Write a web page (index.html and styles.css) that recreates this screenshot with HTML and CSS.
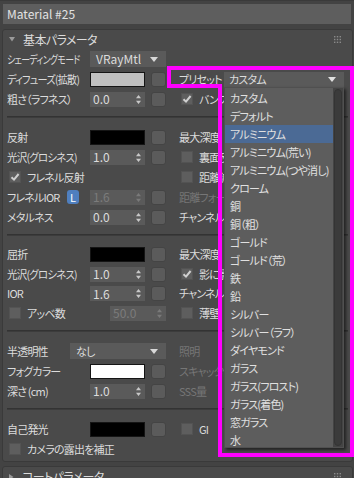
FILE: index.html
```html
<!DOCTYPE html>
<html>
<head>
<meta charset="utf-8">
<link rel="stylesheet" href="styles.css">
</head>
<body>
<div class="titlebar"><div class="namefield">Material #25</div></div>

<div class="rollout">
  <div class="rhead">
    <svg class="tri" width="6" height="5" viewBox="0 0 6 5"><path d="M0 0H6L3 4.5Z" fill="#9a9a9a"/></svg>
    <span class="rtitle">基本パラメータ</span>
    <svg class="grip" width="7" height="7" viewBox="0 0 7 7"><g fill="#8a8a8a"><rect x="0" y="0" width="1.4" height="1.4"/><rect x="2.8" y="0" width="1.4" height="1.4"/><rect x="5.6" y="0" width="1.4" height="1.4"/><rect x="0" y="2.8" width="1.4" height="1.4"/><rect x="2.8" y="2.8" width="1.4" height="1.4"/><rect x="5.6" y="2.8" width="1.4" height="1.4"/><rect x="0" y="5.6" width="1.4" height="1.4"/><rect x="2.8" y="5.6" width="1.4" height="1.4"/><rect x="5.6" y="5.6" width="1.4" height="1.4"/></g></svg>
  </div>

  <div class="sec">
    <div class="row">
      <div class="lc"><span class="lbl"><span class="cond c81">シェーディングモード</span></span><div class="combo w76"><span>VRayMtl</span><svg width="8" height="5" viewBox="0 0 8 5"><path d="M0 0H8L4 5Z" fill="#d8d8d8"/></svg></div></div>
      <div class="rc"></div>
    </div>
    <div class="row">
      <div class="lc"><span class="lbl"><span class="cond c92">ディフューズ(拡散)</span></span><div class="swatch grey"></div><div class="mapbtn"></div></div>
      <div class="rc"><span class="plbl">プリセット</span><div class="combo preset"><span>カスタム</span><svg width="8" height="5" viewBox="0 0 8 5"><path d="M0 0H8L4 5Z" fill="#e0e0e0"/></svg></div></div>
    </div>
    <div class="row">
      <div class="lc"><span class="lbl">粗さ（ラフネス）</span><div class="spin"><span>0.0</span><svg width="5" height="9" viewBox="0 0 5 9"><path d="M2.5 0L5 3.2H0ZM2.5 9L0 5.8H5Z" fill="#c8c8c8"/></svg></div><div class="mapbtn"></div></div>
      <div class="rc"><span class="chk on"><svg width="10" height="10" viewBox="0 0 10 10"><path d="M1.5 5.2L4 7.6L8.6 2" stroke="#d0d0d0" stroke-width="2" fill="none"/></svg></span><span>バンプ</span></div>
    </div>
  </div>
  <div class="sep"></div>

  <div class="sec">
    <div class="row">
      <div class="lc"><span class="lbl">反射</span><div class="swatch black"></div><div class="mapbtn"></div></div>
      <div class="rc"><span>最大深度</span></div>
    </div>
    <div class="row">
      <div class="lc"><span class="lbl"><span class="cond c95">光沢(グロシネス)</span></span><div class="spin"><span>1.0</span><svg width="5" height="9" viewBox="0 0 5 9"><path d="M2.5 0L5 3.2H0ZM2.5 9L0 5.8H5Z" fill="#c8c8c8"/></svg></div><div class="mapbtn"></div></div>
      <div class="rc"><span class="chk"></span><span>裏面反射</span></div>
    </div>
    <div class="row">
      <div class="lc"><span class="chk on left"><svg width="10" height="10" viewBox="0 0 10 10"><path d="M1.5 5.2L4 7.6L8.6 2" stroke="#d0d0d0" stroke-width="2" fill="none"/></svg></span><span>フレネル反射</span></div>
      <div class="rc"><span class="chk"></span><span>距離減衰</span></div>
    </div>
    <div class="row">
      <div class="lc"><span class="lbl flexlbl"><span>フレネルIOR</span><span class="lbtn">L</span></span><div class="spin dis"><span>1.6</span><svg width="5" height="9" viewBox="0 0 5 9"><path d="M2.5 0L5 3.2H0ZM2.5 9L0 5.8H5Z" fill="#7a7a7a"/></svg></div><div class="mapbtn"></div></div>
      <div class="rc dim"><span>距離フォールオフ</span></div>
    </div>
    <div class="row">
      <div class="lc"><span class="lbl">メタルネス</span><div class="spin"><span>0.0</span><svg width="5" height="9" viewBox="0 0 5 9"><path d="M2.5 0L5 3.2H0ZM2.5 9L0 5.8H5Z" fill="#c8c8c8"/></svg></div><div class="mapbtn"></div></div>
      <div class="rc"><span>チャンネルID</span></div>
    </div>
  </div>
  <div class="sep"></div>

  <div class="sec s3">
    <div class="row">
      <div class="lc"><span class="lbl">屈折</span><div class="swatch black"></div><div class="mapbtn"></div></div>
      <div class="rc"><span>最大深度</span></div>
    </div>
    <div class="row">
      <div class="lc"><span class="lbl"><span class="cond c95">光沢(グロシネス)</span></span><div class="spin"><span>1.0</span><svg width="5" height="9" viewBox="0 0 5 9"><path d="M2.5 0L5 3.2H0ZM2.5 9L0 5.8H5Z" fill="#c8c8c8"/></svg></div><div class="mapbtn"></div></div>
      <div class="rc"><span class="chk on"><svg width="10" height="10" viewBox="0 0 10 10"><path d="M1.5 5.2L4 7.6L8.6 2" stroke="#d0d0d0" stroke-width="2" fill="none"/></svg></span><span>影に影響</span></div>
    </div>
    <div class="row">
      <div class="lc"><span class="lbl">IOR</span><div class="spin"><span>1.6</span><svg width="5" height="9" viewBox="0 0 5 9"><path d="M2.5 0L5 3.2H0ZM2.5 9L0 5.8H5Z" fill="#c8c8c8"/></svg></div><div class="mapbtn"></div></div>
      <div class="rc"><span>チャンネルID</span></div>
    </div>
    <div class="row">
      <div class="lc"><span class="chk left"></span><span>アッベ数</span><div class="spin dis w56"><span>50.0</span><svg width="5" height="9" viewBox="0 0 5 9"><path d="M2.5 0L5 3.2H0ZM2.5 9L0 5.8H5Z" fill="#7a7a7a"/></svg></div></div>
      <div class="rc"><span class="chk"></span><span>薄壁</span></div>
    </div>
  </div>
  <div class="sep"></div>

  <div class="sec">
    <div class="row">
      <div class="lc"><span class="lbl short">半透明性</span><div class="combo w96"><span>なし</span><svg width="8" height="5" viewBox="0 0 8 5"><path d="M0 0H8L4 5Z" fill="#d8d8d8"/></svg></div></div>
      <div class="rc dim"><span>照明</span></div>
    </div>
    <div class="row">
      <div class="lc"><span class="lbl">フォグカラー</span><div class="swatch white"></div><div class="mapbtn"></div></div>
      <div class="rc dim"><span>スキャッタ係数</span></div>
    </div>
    <div class="row">
      <div class="lc"><span class="lbl">深さ (cm)</span><div class="spin"><span>1.0</span><svg width="5" height="9" viewBox="0 0 5 9"><path d="M2.5 0L5 3.2H0ZM2.5 9L0 5.8H5Z" fill="#c8c8c8"/></svg></div><div class="mapbtn"></div></div>
      <div class="rc dim"><span>SSS量</span></div>
    </div>
  </div>
  <div class="sep"></div>

  <div class="sec">
    <div class="row">
      <div class="lc"><span class="lbl">自己発光</span><div class="swatch black"></div><div class="mapbtn"></div></div>
      <div class="rc"><span class="chk"></span><span>GI</span></div>
    </div>
    <div class="row">
      <div class="lc"><span class="chk left"></span><span>カメラの露出を補正</span></div>
      <div class="rc"></div>
    </div>
  </div>
</div>

<div class="rollout closed">
  <div class="rhead">
    <svg class="tri" width="5" height="6" viewBox="0 0 5 6"><path d="M0 0L4.5 3L0 6Z" fill="#9a9a9a"/></svg>
    <span class="rtitle">コートパラメータ</span>
    <svg class="grip" width="7" height="7" viewBox="0 0 7 7"><g fill="#8a8a8a"><rect x="0" y="0" width="1.4" height="1.4"/><rect x="2.8" y="0" width="1.4" height="1.4"/><rect x="5.6" y="0" width="1.4" height="1.4"/><rect x="0" y="2.8" width="1.4" height="1.4"/><rect x="2.8" y="2.8" width="1.4" height="1.4"/><rect x="5.6" y="2.8" width="1.4" height="1.4"/><rect x="0" y="5.6" width="1.4" height="1.4"/><rect x="2.8" y="5.6" width="1.4" height="1.4"/><rect x="5.6" y="5.6" width="1.4" height="1.4"/></g></svg>
  </div>
</div>

<div class="plist">
  <div class="items">
    <div class="it">カスタム</div>
    <div class="it">デフォルト</div>
    <div class="it sel">アルミニウム</div>
    <div class="it">アルミニウム(荒い)</div>
    <div class="it">アルミニウム(つや消し)</div>
    <div class="it">クローム</div>
    <div class="it">銅</div>
    <div class="it">銅（粗）</div>
    <div class="it">ゴールド</div>
    <div class="it">ゴールド（荒）</div>
    <div class="it">鉄</div>
    <div class="it">鉛</div>
    <div class="it">シルバー</div>
    <div class="it">シルバー（ラフ）</div>
    <div class="it">ダイヤモンド</div>
    <div class="it">ガラス</div>
    <div class="it">ガラス(フロスト)</div>
    <div class="it">ガラス(着色)</div>
    <div class="it">窓ガラス</div>
    <div class="it">水</div>
  </div>
  <div class="sbar"><div class="thumb"></div></div>
</div>

<svg class="hl" width="354" height="478" viewBox="0 0 354 478"><path d="M169 68H352V455H220V86H169Z" stroke="#ff00ff" stroke-width="4" fill="none"/></svg>
</body>
</html>
```

FILE: styles.css
```css
* { box-sizing: border-box; }
body {
  margin: 0;
  width: 354px;
  height: 478px;
  overflow: hidden;
  position: relative;
  background: #434343;
  color: #dcdcdc;
  font-family: "Noto Sans CJK JP", "Noto Sans", sans-serif;
  font-size: 11px;
  font-feature-settings: "palt" 1;
  letter-spacing: -0.8px;
  line-height: 1;
}
.titlebar {
  height: 29px;
  padding: 3px 3px 0 3px;
  border-top: 1px solid #3a3a3a;
}
.namefield {
  height: 20px;
  background: #5e5e5e;
  display: flex;
  align-items: center;
  padding-left: 4px;
  color: #e2e2e2;
  font-size: 12px;
  letter-spacing: 0;
}
.rollout {
  margin: 0 1px 0 2px;
  background: #4a4a4a;
  border: 1px solid #3a3a3a;
  border-radius: 3px;
  padding: 0 4px 2px 4px;
}
.rollout.closed {
  margin-top: 4px;
  padding-bottom: 0;
}
.rhead {
  height: 19px;
  display: flex;
  align-items: center;
  font-size: 12px;
  letter-spacing: -0.6px;
}
.tri { margin-left: 2px; margin-right: 8px; }
.rtitle { flex: 1; }
.grip { margin-right: 7px; }
.row {
  height: 20px;
  display: grid;
  grid-template-columns: 159px 1fr;
  column-gap: 13px;
  align-items: center;
}
.s3 .row { height: 19.5px; }
.lc, .rc {
  display: flex;
  align-items: center;
  white-space: nowrap;
}
.rc { overflow: hidden; }
.lbl { width: 83px; flex: none; white-space: nowrap; }
.lbl.short { width: 63px; }
.cond {
  display: inline-block;
  transform-origin: left center;
}
.c81 { transform: scaleX(0.81); }
.c92 { transform: scaleX(0.92); }
.c95 { transform: scaleX(0.95); }
.flexlbl { display: flex; align-items: center; }
.lbtn {
  margin-left: auto;
  margin-right: 11px;
  width: 12px;
  height: 14px;
  background: #4f7fbf;
  border-radius: 3px;
  color: #fff;
  font-size: 11px;
  letter-spacing: 0;
  display: flex;
  align-items: center;
  justify-content: center;
}
.spin {
  width: 55px;
  height: 15px;
  background: #5a5a5a;
  display: flex;
  align-items: center;
  justify-content: space-between;
  padding: 0 4px 0 3px;
  flex: none;
  font-size: 12px;
  letter-spacing: 0;
}
.spin.dis { color: #7c7c7c; }
.spin.w56 { width: 56px; margin-left: auto; }
.combo {
  height: 16px;
  background: #5a5a5a;
  display: flex;
  align-items: center;
  justify-content: space-between;
  padding: 0 8px 0 6px;
  flex: none;
}
.w76 { width: 76px; font-size: 12px; letter-spacing: 0; }
.w96 { width: 96px; }
.combo.preset { width: 120px; padding-left: 5px; height: 15px; }
.plbl { width: 45px; flex: none; }
.swatch {
  width: 55px;
  height: 15px;
  border: 1px solid #151515;
  flex: none;
}
.swatch.grey { background: #c0c0c0; }
.swatch.black { background: #000; }
.swatch.white { background: #fff; }
.mapbtn {
  width: 15px;
  height: 15px;
  margin-left: 6px;
  background: #5b5b5b;
  border: 1px solid #444;
  border-radius: 3px;
  flex: none;
}
.chk {
  width: 12px;
  height: 12px;
  background: #5e5e5e;
  border: 1px solid #535353;
  margin: 0 6px 0 2px;
  display: flex;
  align-items: center;
  justify-content: center;
  flex: none;
}
.chk.left { margin-left: 2px; margin-right: 6px; }
.dim { color: #767676; }
.sep {
  height: 2px;
  margin: 7px 0 9px 0;
  background: #333;
  border-bottom: 1px solid #3c3c3c;
}
.plist {
  position: absolute;
  left: 224px;
  top: 87px;
  width: 120px;
  height: 361px;
  background: #5d5d5d;
  display: flex;
  box-shadow: 2px 2px 3px rgba(0,0,0,0.55);
  border: 1px solid #505050;
}
.items { flex: 1; padding-top: 1px; }
.it {
  height: 18px;
  display: flex;
  align-items: center;
  padding-left: 5px;
  white-space: nowrap;
  color: #e0e0e0;
}
.it.sel { background: #4b6a95; }
.sbar {
  width: 10px;
  background: #444;
  padding: 1px 1px;
}
.thumb {
  height: 100%;
  background: #3b3b3b;
  border: 1px solid #343434;
  border-radius: 4px;
}
.hl {
  position: absolute;
  left: 0;
  top: 0;
  pointer-events: none;
}
```
